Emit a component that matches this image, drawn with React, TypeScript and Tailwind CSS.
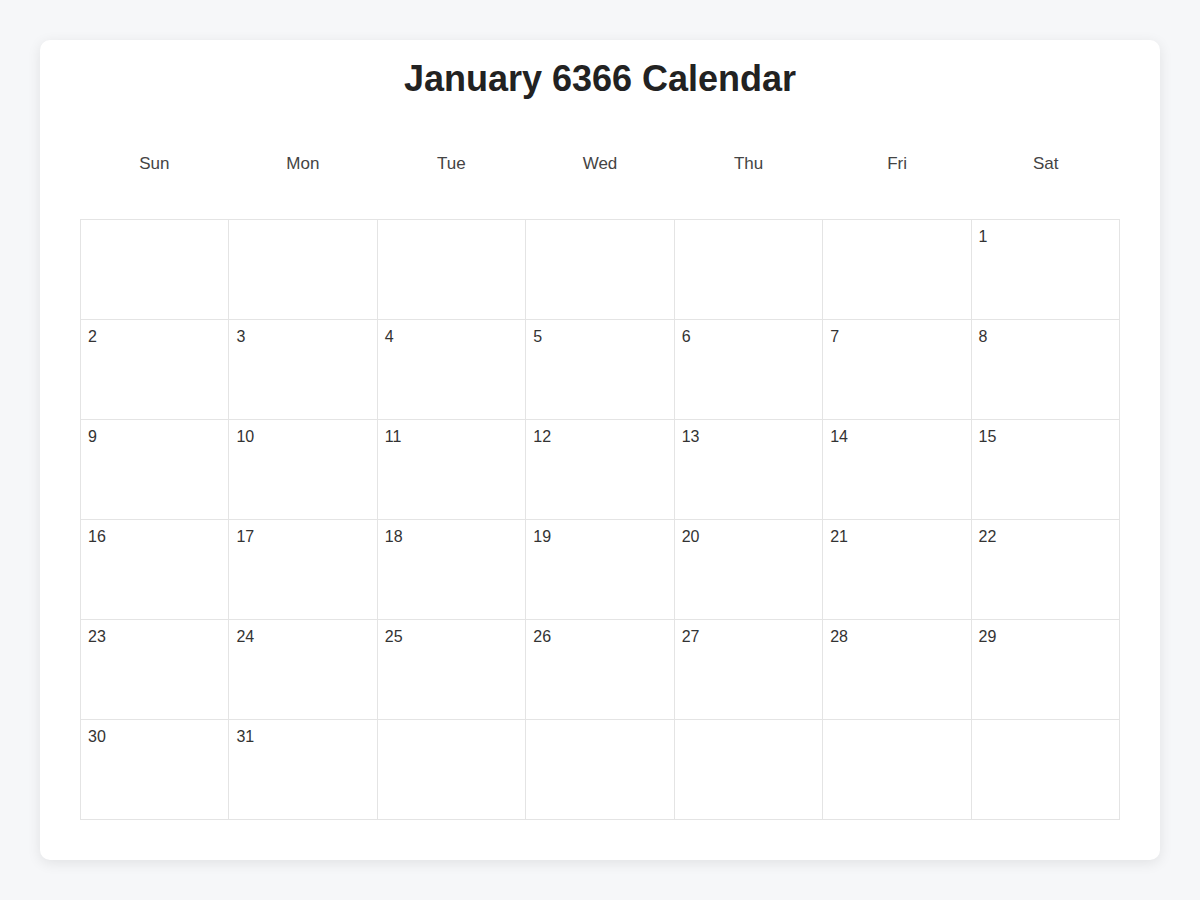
const days = ["Sun", "Mon", "Tue", "Wed", "Thu", "Fri", "Sat"];

// January 6366 starts on a Saturday
const cells: (number | null)[] = [
  ...Array(6).fill(null),
  ...Array.from({ length: 31 }, (_, i) => i + 1),
];
while (cells.length < 42) cells.push(null);

export default function App() {
  return (
    <div className="min-h-screen bg-[#f6f7f9] p-10 font-['Liberation_Sans',Arial,sans-serif]">
      <div className="rounded-[10px] bg-white px-10 pb-10 pt-[17px] shadow-[0_3px_14px_rgba(0,0,0,0.09)]">
        <h1 className="text-center text-[36px] font-bold leading-[44px] text-[#222]">
          January 6366 Calendar
        </h1>

        <div className="mt-[45px] grid grid-cols-7">
          {days.map((d) => (
            <div key={d} className="py-2 text-center text-[17px] leading-[20px] text-[#444]">
              {d}
            </div>
          ))}
        </div>

        <div className="mt-[37px] grid grid-cols-7 border-l border-t border-[#e4e4e4]">
          {cells.map((n, i) => (
            <div
              key={i}
              className="h-[100px] border-b border-r border-[#e4e4e4] pl-[7px] pr-2 pt-2 text-[16px] leading-[18px] text-[#333]"
            >
              {n}
            </div>
          ))}
        </div>
      </div>
    </div>
  );
}
